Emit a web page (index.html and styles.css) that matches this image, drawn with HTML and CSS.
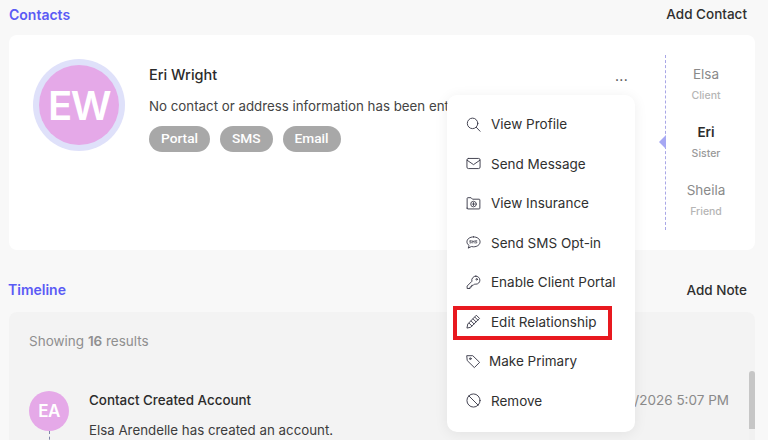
FILE: index.html
```html
<!DOCTYPE html>
<html lang="en">
<head>
<meta charset="utf-8">
<title>Contacts</title>
<link rel="stylesheet" href="styles.css">
</head>
<body>
<div class="page">
  <section class="contacts">
    <header class="section-head">
      <h2>Contacts</h2>
      <span class="action">Add Contact</span>
    </header>
    <div class="card">
      <div class="avatar-ring"><div class="avatar">EW</div></div>
      <div class="info">
        <div class="name">Eri Wright</div>
        <p class="desc">No contact or address information has been entered.</p>
        <div class="pills"><span class="pill">Portal</span><span class="pill">SMS</span><span class="pill">Email</span></div>
      </div>
      <div class="dots">...</div>
      <aside class="people">
        <span class="marker"></span>
        <div class="person"><b>Elsa</b><small>Client</small></div>
        <div class="person current"><b>Eri</b><small>Sister</small></div>
        <div class="person"><b>Sheila</b><small>Friend</small></div>
      </aside>
    </div>
  </section>
  <section class="timeline">
    <header class="section-head">
      <h2>Timeline</h2>
      <span class="action">Add Note</span>
    </header>
    <div class="panel">
      <div class="results">Showing <b>16</b> results</div>
      <div class="event">
        <div class="event-side"><div class="mini-avatar">EA</div><span class="event-line"></span></div>
        <div class="event-body">
          <div class="event-title">Contact Created Account</div>
          <div class="event-text">Elsa Arendelle has created an account.</div>
        </div>
        <div class="event-date">1/7/2026 5:07 PM</div>
      </div>
      <div class="scroll"><span class="thumb"></span></div>
    </div>
  </section>
</div>

<nav class="menu">
  <div class="item"><svg viewBox="0 0 16 16"><circle cx="7" cy="6.800" r="5.600"/><path d="M11 11l4 4.200"/></svg>View Profile</div>
  <div class="item"><svg viewBox="0 0 16 16"><rect x="1" y="2.600" width="14" height="10.800" rx="1.600"/><path d="M1.300 4.600L8 9.200l6.700-4.600"/></svg>Send Message</div>
  <div class="item"><svg viewBox="0 0 16 16"><path d="M1.200 13V2.600c0-.5.3-.8.8-.8h3.400l1.500 1.600H14c.5 0 .8.3.8.8V13c0 .5-.3.8-.8.8H2c-.5 0-.8-.3-.8-.8z"/><circle class="o" cx="8" cy="8.600" r="3"/><path class="o" d="M8 7v3.200M6.400 8.600h3.200"/></svg>View Insurance</div>
  <div class="item"><svg viewBox="0 0 16 16"><path d="M8 2c4 0 7 2.300 7 5.300s-3 5.300-7 5.300c-.8 0-1.600-.1-2.300-.3L2.400 14l.9-2.800C1.900 10.200 1 8.800 1 7.300 1 4.300 4 2 8 2z"/><path class="t" d="M4 8.500h1.500V7.200H4V6h1.500M6.700 8.500V6l1 1.500 1-1.500v2.500M10 8.500h1.500V7.200H10V6h1.500"/></svg>Send SMS Opt-in</div>
  <div class="item"><svg viewBox="0 0 16 16"><path d="M10.500 1.200a4.300 4.300 0 0 1 4.300 4.300c0 2.400-1.900 4.300-4.300 4.300-.5 0-1-.1-1.400-.2L7.700 11H6v1.700H4.300v1.700H1.200v-2.600l5.100-5.100a4.300 4.300 0 0 1 4.200-5.500z"/><circle cx="11.400" cy="4.600" r=".8"/></svg>Enable Client Portal</div>
  <div class="item"><svg viewBox="0 0 16 16"><path d="M11.300 1.600l3.100 3.100-9.500 9.500-3.900.8.800-3.900z"/><path d="M9.500 3.400l3.100 3.100M3.300 9.800l2.900 2.900M7.600 5.300l3.100 3.100M5.500 7.500l3.100 3.100"/></svg>Edit Relationship</div>
  <div class="item tag"><svg viewBox="0 0 16 16"><path d="M1.200 1.800h6l7.300 7.100-5.600 5.600-7.300-7.200z"/><circle cx="4.600" cy="5" r=".9"/></svg>Make Primary</div>
  <div class="item"><svg viewBox="0 0 16 16"><circle cx="8" cy="8" r="7"/><path d="M3 3l10 10"/></svg>Remove</div>
</nav>
<div class="highlight"></div>
</body>
</html>
```
FILE: styles.css
```css
* { box-sizing: border-box; }
html, body { margin: 0; height: 100%; overflow: hidden; }
body {
  background: #f8f8f8;
  font-family: "Inter", "Liberation Sans", sans-serif;
  color: #333;
  position: relative;
}
.page { padding: 0 13px 0 9px; width: 768px; height: 440px; overflow: hidden; }
.section-head {
  display: flex;
  justify-content: space-between;
  align-items: center;
  padding-right: 8px;
}
.section-head h2 {
  margin: 0;
  font-size: 14px;
  font-weight: 600;
  color: #5b5bf5;
}
.action { font-size: 13.500px; font-weight: 450; color: #2f2f2f; }
.contacts .section-head { height: 28px; }
.card {
  position: relative;
  margin-top: 7px;
  height: 215px;
  width: 746px;
  background: #fff;
  border-radius: 8px;
  display: flex;
  padding: 24px 0 0 24px;
}
.avatar-ring {
  width: 92px;
  height: 92px;
  border-radius: 50%;
  background: #dfe1fa;
  padding: 6px;
  flex: none;
}
.avatar {
  width: 80px;
  height: 80px;
  border-radius: 50%;
  background: #e5a9e8;
  color: #fff;
  font-size: 40px;
  font-weight: 600;
  letter-spacing: -1.500px;
  display: flex;
  align-items: center;
  justify-content: center;
}
.info { margin-left: 24px; padding-top: 7px; width: 400px; }
.name { font-size: 14.500px; font-weight: 500; color: #2b2b2b; line-height: 18px; }
.desc { margin: 13px 0 0; font-size: 13.300px; color: #444; line-height: 18px; white-space: nowrap; }
.pills { display: flex; gap: 10px; margin-top: 11px; }
.pill {
  background: #a8a8a8;
  color: #fff;
  font-family: "Roboto", sans-serif;
  font-weight: 500;
  font-size: 13.700px;
  height: 26px;
  line-height: 25px;
  padding: 0 12px;
  border-radius: 13px;
}
.dots { position: absolute; left: 606px; top: 31px; font-size: 14px; color: #444; line-height: 20px; letter-spacing: .3px; }
.people {
  position: absolute;
  left: 656px;
  top: 20px;
  width: 90px;
  height: 175px;
  border-left: 1px dashed #a9a7e6;
  padding-top: 10px;
  display: flex;
  flex-direction: column;
  gap: 20px;
  align-items: center;
}
.marker {
  position: absolute;
  left: -7px;
  top: 80px;
  width: 7px;
  height: 14px;
  background: #a6a8f3;
  clip-path: polygon(100% 0, 100% 100%, 0 50%);
}
.person { text-align: center; padding-right: 9px; line-height: 1; }
.person b { display: block; font-size: 13.500px; font-weight: 400; color: #8a8a8a; line-height: 18px; }
.person small { display: block; font-size: 10.500px; color: #b5b5b5; line-height: 14px; margin-top: 6px; font-weight: 500; }
.person.current b { font-weight: 600; color: #2b2b2b; }
.person.current small { color: #999; }
.timeline { margin-top: 26px; }
.timeline .section-head { height: 27px; }
.timeline h2 { font-size: 14px; margin-left: -1px; }
.panel {
  position: relative;
  margin-top: 9px;
  width: 746px;
  height: 128px;
  overflow: hidden;
  background: #f3f3f3;
  border-radius: 8px 8px 0 0;
  padding: 20px 20px 0;
}
.results { font-size: 13.500px; color: #8f8f8f; line-height: 18px; }
.results b { font-weight: 600; }
.event { display: flex; margin-top: 41px; }
.event-side { width: 40px; flex: none; display: flex; flex-direction: column; align-items: center; }
.mini-avatar {
  width: 40px;
  height: 40px;
  border-radius: 50%;
  background: #e5a9e8;
  color: #fff;
  font-size: 17px;
  font-weight: 600;
  letter-spacing: -.5px;
  display: flex;
  align-items: center;
  justify-content: center;
}
.event-line { width: 0; height: 20px; border-left: 1px dashed #7f86a8; }
.event-body { margin-left: 20px; flex: 1; }
.event-title { font-size: 13.400px; font-weight: 500; color: #2b2b2b; line-height: 18px; }
.event-text { font-size: 13.300px; color: #3c3c3c; line-height: 18px; margin-top: 12px; }
.event-date { font-size: 13.500px; color: #8a8a8a; line-height: 18px; padding-right: 6px; }
.scroll { position: absolute; right: 0; top: 59px; width: 6px; bottom: 0; background: #f1f1f1; }
.thumb { display: block; height: 58px; background: #c6c6c6; border-radius: 3px 3px 0 0; }
.menu {
  position: absolute;
  left: 447px;
  top: 95px;
  width: 188px;
  height: 337px;
  background: #fff;
  border-radius: 10px;
  box-shadow: 0 2px 14px rgba(0, 0, 0, .07);
  padding: 9.500px 0 0 19px;
  display: flex;
  flex-direction: column;
}
.item {
  display: flex;
  align-items: center;
  gap: 10px;
  height: 39.500px;
  font-size: 13.500px;
  color: #303030;
  white-space: nowrap;
}
.item.tag { gap: 8px; }
.item svg {
  width: 15px;
  height: 15px;
  flex: none;
  fill: none;
  stroke: #3b3b4a;
  stroke-width: 1;
  stroke-linejoin: round;
  stroke-linecap: round;
}
.item svg .o { stroke: #3b3b4a; stroke-width: .9; }
.item svg .t { stroke-width: .7; }
.highlight {
  position: absolute;
  left: 453px;
  top: 306px;
  width: 159px;
  height: 34px;
  border: 4px solid #e8191f;
}
```
